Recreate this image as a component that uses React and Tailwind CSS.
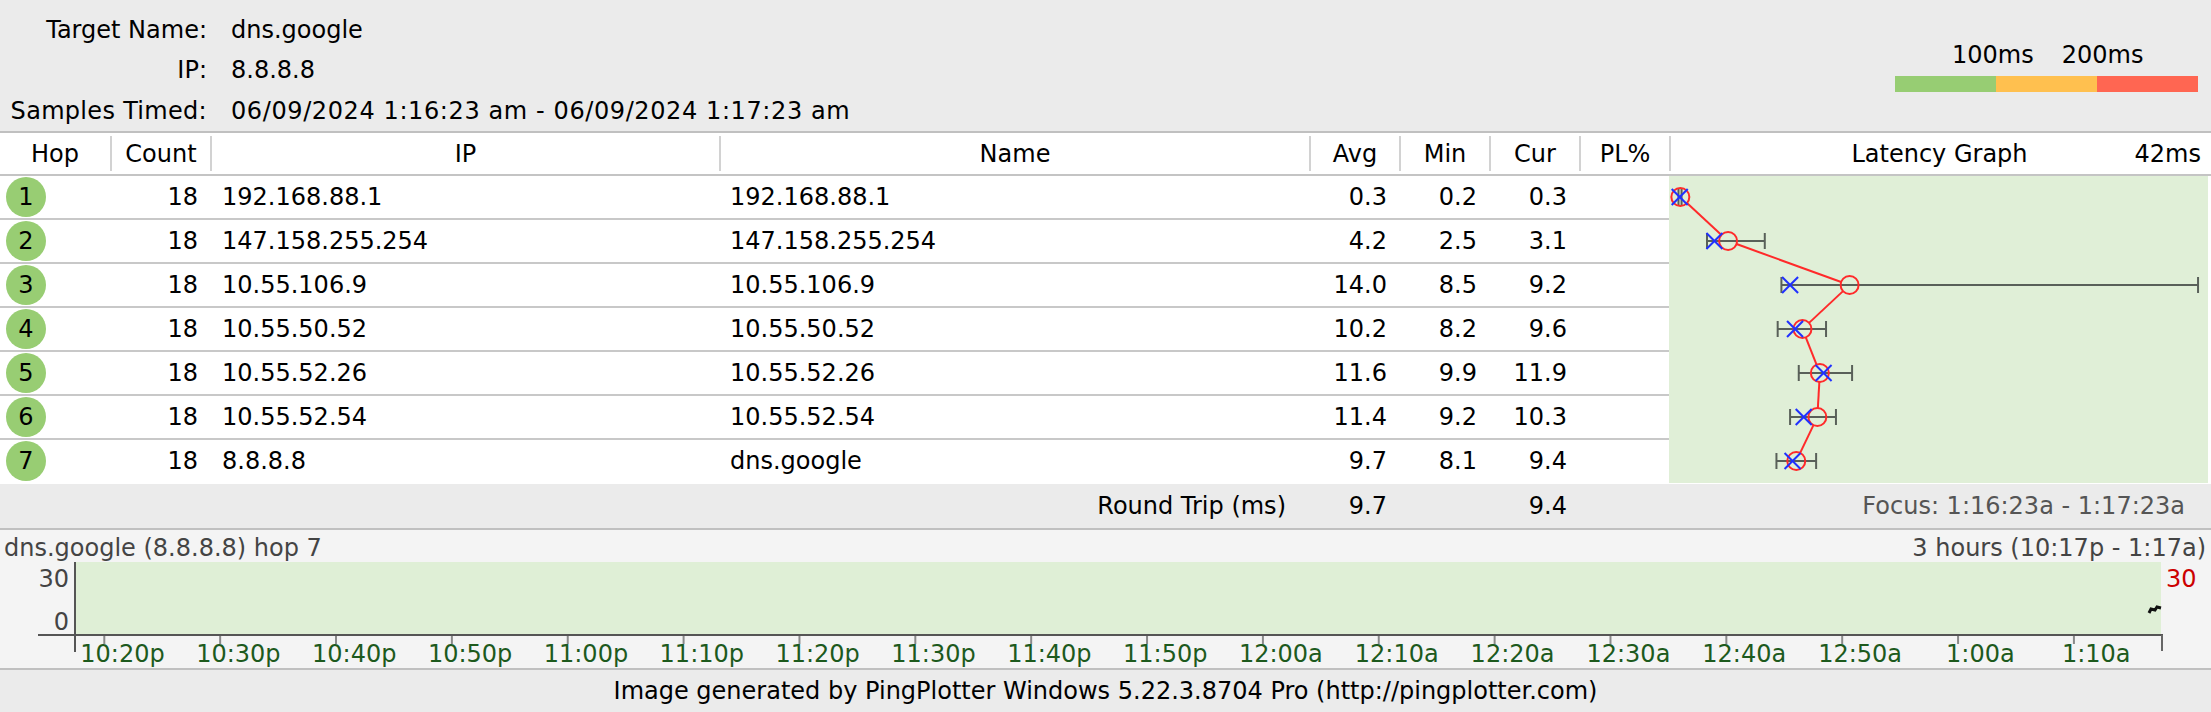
import React from "react";

const hops = [
  { n: 1, count: 18, ip: "192.168.88.1", name: "192.168.88.1", avg: "0.3", min: "0.2", cur: "0.3", v: [0.2, 0.35, 0.3, 0.45] },
  { n: 2, count: 18, ip: "147.158.255.254", name: "147.158.255.254", avg: "4.2", min: "2.5", cur: "3.1", v: [2.5, 4.2, 3.1, 7.16] },
  { n: 3, count: 18, ip: "10.55.106.9", name: "10.55.106.9", avg: "14.0", min: "8.5", cur: "9.2", v: [8.5, 14.0, 9.2, 42.1] },
  { n: 4, count: 18, ip: "10.55.50.52", name: "10.55.50.52", avg: "10.2", min: "8.2", cur: "9.6", v: [8.2, 10.2, 9.6, 12.1] },
  { n: 5, count: 18, ip: "10.55.52.26", name: "10.55.52.26", avg: "11.6", min: "9.9", cur: "11.9", v: [9.9, 11.6, 11.9, 14.2] },
  { n: 6, count: 18, ip: "10.55.52.54", name: "10.55.52.54", avg: "11.4", min: "9.2", cur: "10.3", v: [9.2, 11.4, 10.3, 12.9] },
  { n: 7, count: 18, ip: "8.8.8.8", name: "dns.google", avg: "9.7", min: "8.1", cur: "9.4", v: [8.1, 9.7, 9.4, 11.3] },
];

const times = [
  "10:20p", "10:30p", "10:40p", "10:50p", "11:00p", "11:10p", "11:20p", "11:30p", "11:40p",
  "11:50p", "12:00a", "12:10a", "12:20a", "12:30a", "12:40a", "12:50a", "1:00a", "1:10a",
];

// ms -> x inside the latency graph
const gx = (ms) => 7 + 12.4 * ms;
const rowY = (i) => 21 + i * 44;

function HeaderCell({ w, label, divider = true }) {
  return (
    <div className={`flex h-full items-stretch ${w}`}>
      {divider && <div className="my-[3px] w-[2px] bg-[#d2d2d2]" />}
      <div className="flex flex-1 items-center justify-center">{label}</div>
    </div>
  );
}

function LatencyGraph() {
  const pts = hops.map((h, i) => ({ x: gx(h.v[1]), y: rowY(i) }));
  const segs = [];
  for (let i = 0; i < pts.length - 1; i++) {
    const a = pts[i];
    const b = pts[i + 1];
    const dx = b.x - a.x;
    const dy = b.y - a.y;
    const len = Math.hypot(dx, dy);
    const ux = dx / len;
    const uy = dy / len;
    segs.push([a.x + ux * 9, a.y + uy * 9, b.x - ux * 9, b.y - uy * 9]);
  }
  return (
    <svg width="542" height="308" className="block">
      <rect x="0" y="0" width="539" height="307" fill="#e0efd7" />
      {hops.map((h, i) => {
        const y = rowY(i);
        const x1 = gx(h.v[0]);
        const x2 = Math.min(gx(h.v[3]), 529.5);
        return (
          <g key={"b" + i} stroke="#596059" strokeWidth="2">
            <line x1={x1} y1={y} x2={x2} y2={y} />
            <line x1={x1} y1={y - 8} x2={x1} y2={y + 8} />
            <line x1={x2} y1={y - 8} x2={x2} y2={y + 8} />
          </g>
        );
      })}
      {segs.map((s, i) => (
        <line key={"s" + i} x1={s[0]} y1={s[1]} x2={s[2]} y2={s[3]} stroke="#ff2a2a" strokeWidth="2" />
      ))}
      {pts.map((p, i) => (
        <circle key={"c" + i} cx={p.x} cy={p.y} r="9" fill="none" stroke="#ff2a2a" strokeWidth="2" />
      ))}
      {hops.map((h, i) => {
        const x = gx(h.v[2]);
        const y = rowY(i);
        return (
          <g key={"x" + i} stroke="#2030ff" strokeWidth="2">
            <line x1={x - 8} y1={y - 8} x2={x + 8} y2={y + 8} />
            <line x1={x - 8} y1={y + 8} x2={x + 8} y2={y - 8} />
          </g>
        );
      })}
    </svg>
  );
}

function TimeChart() {
  const font = "DejaVu Sans, sans-serif";
  return (
    <svg width="2211" height="106" className="block">
      <rect x="76" y="0" width="2085" height="72" fill="#dfefd6" />
      <line x1="75" y1="0" x2="75" y2="90" stroke="#555" strokeWidth="2" />
      <line x1="38" y1="73" x2="2163" y2="73" stroke="#555" strokeWidth="2" />
      <line x1="2162" y1="73" x2="2162" y2="89" stroke="#666" strokeWidth="2" />
      <path d="M2149 51 L2151 47 L2155 48 L2157 45 L2161 46" fill="none" stroke="#111" strokeWidth="3" />
      {times.map((t, i) => {
        const x = 104.3 + i * 115.86;
        const off = t.indexOf(":") === 2 ? 24 : 12;
        return (
          <g key={t}>
            <line x1={x} y1="74" x2={x} y2="82" stroke="#8a8a8a" strokeWidth="2" />
            <text x={x - off} y="100" fontSize="24" fill="#1d5a1d" fontFamily={font}>
              {t}
            </text>
          </g>
        );
      })}
      <text x="69" y="25" fontSize="24" fill="#444" textAnchor="end" fontFamily={font}>30</text>
      <text x="69" y="68" fontSize="24" fill="#444" textAnchor="end" fontFamily={font}>0</text>
      <text x="2166" y="25" fontSize="24" fill="#cc0000" fontFamily={font}>30</text>
    </svg>
  );
}

export default function App() {
  return (
    <div className="w-[2211px] h-[712px] overflow-hidden bg-white text-[24px] text-black font-['DejaVu_Sans',sans-serif]">
      {/* target info + legend */}
      <div className="flex h-[133px] justify-between border-b-2 border-[#c0c0c0] bg-[#ebebeb]">
        <div className="grid grid-cols-[207px_auto] gap-x-6 pt-[10px]">
          <div className="flex h-[40px] items-center justify-end">Target Name:</div>
          <div className="flex h-[40px] items-center">dns.google</div>
          <div className="flex h-[40px] items-center justify-end">IP:</div>
          <div className="flex h-[40px] items-center">8.8.8.8</div>
          <div className="flex h-[40px] items-center justify-end tracking-[0.3px]">Samples Timed:</div>
          <div className="flex h-[40px] items-center tracking-[0.6px]">06/09/2024 1:16:23 am - 06/09/2024 1:17:23 am</div>
        </div>
        <div className="pt-[41px] pr-[13px]">
          <div className="flex h-[28px] items-center gap-[28px] pl-[57px] leading-[28px]">
            <span>100ms</span>
            <span>200ms</span>
          </div>
          <div className="mt-[7px] flex h-[16px]">
            <div className="w-[101px] bg-[#97cd73]" />
            <div className="w-[101px] bg-[#ffc04f]" />
            <div className="w-[101px] bg-[#ff6652]" />
          </div>
        </div>
      </div>

      {/* table header */}
      <div className="flex h-[43px] border-b-2 border-[#c4c4c4] bg-white">
        <HeaderCell w="w-[110px]" label="Hop" divider={false} />
        <HeaderCell w="w-[100px]" label="Count" />
        <HeaderCell w="w-[509px]" label="IP" />
        <HeaderCell w="w-[590px]" label="Name" />
        <HeaderCell w="w-[90px]" label="Avg" />
        <HeaderCell w="w-[90px]" label="Min" />
        <HeaderCell w="w-[90px]" label="Cur" />
        <HeaderCell w="w-[90px]" label="PL%" />
        <div className="flex h-full flex-1 items-stretch">
          <div className="my-[3px] w-[2px] bg-[#d2d2d2]" />
          <div className="relative flex flex-1 items-center justify-center pr-[3px]">
            <span>Latency Graph</span>
            <span className="absolute right-[10px]">42ms</span>
          </div>
        </div>
      </div>

      {/* hop rows */}
      <div className="flex">
        <div className="w-[1669px]">
          {hops.map((h, i) => (
            <div
              key={h.n}
              className={`flex h-[44px] items-center border-b-2 ${i === hops.length - 1 ? "border-white" : "border-[#c8c8c8]"}`}
            >
              <div className="w-[110px]">
                <div className="ml-[6px] flex h-[40px] w-[40px] items-center justify-center rounded-full bg-[#98cd73]">
                  {h.n}
                </div>
              </div>
              <div className="w-[100px] pr-[12px] text-right">{h.count}</div>
              <div className="w-[509px] pl-[12px]">{h.ip}</div>
              <div className="w-[590px] pl-[11px]">{h.name}</div>
              <div className="w-[90px] pr-[12px] text-right">{h.avg}</div>
              <div className="w-[90px] pr-[12px] text-right">{h.min}</div>
              <div className="w-[90px] pr-[12px] text-right">{h.cur}</div>
              <div className="w-[90px]" />
            </div>
          ))}
        </div>
        <LatencyGraph />
      </div>

      {/* round trip */}
      <div className="flex h-[46px] items-center border-b-2 border-[#c0c0c0] bg-[#ebebeb]">
        <div className="w-[1309px] pr-[23px] text-right">Round Trip (ms)</div>
        <div className="w-[90px] pr-[12px] text-right">9.7</div>
        <div className="w-[90px]" />
        <div className="w-[90px] pr-[12px] text-right">9.4</div>
        <div className="w-[90px]" />
        <div className="flex-1 pr-[26px] text-right text-[#555]">Focus: 1:16:23a - 1:17:23a</div>
      </div>

      {/* history chart */}
      <div className="h-[140px] border-b-2 border-[#c0c0c0] bg-[#f4f4f4]">
        <div className="flex h-[32px] items-start justify-between pt-[5px] pl-[4px] pr-[5px] leading-[27px] text-[#444]">
          <span>dns.google (8.8.8.8) hop 7</span>
          <span>3 hours (10:17p - 1:17a)</span>
        </div>
        <TimeChart />
      </div>

      {/* footer */}
      <div className="flex h-[42px] items-center justify-center bg-[#ebebeb]">
        Image generated by PingPlotter Windows 5.22.3.8704 Pro (http://pingplotter.com)
      </div>
    </div>
  );
}
